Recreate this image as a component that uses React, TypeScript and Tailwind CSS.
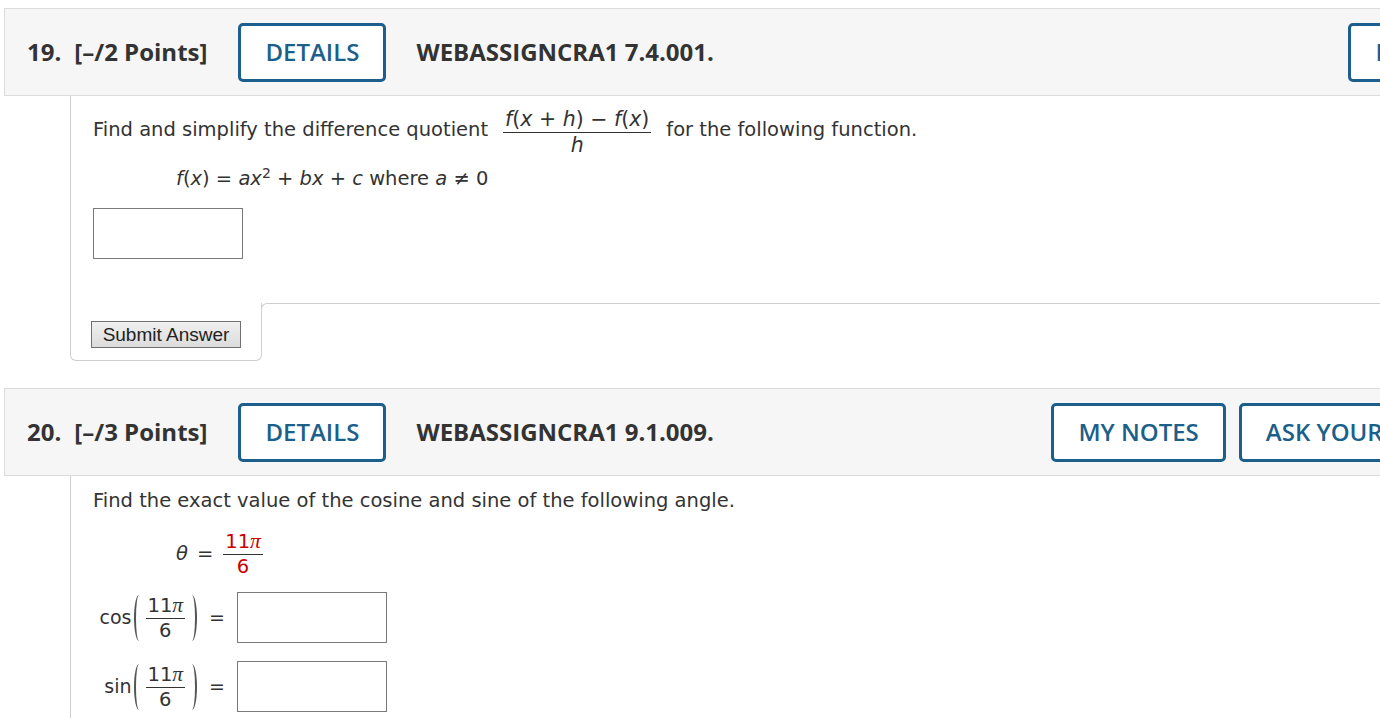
const hdr = "font-['Open_Sans',sans-serif]"
const body = "font-['DejaVu_Sans',Verdana,sans-serif]"

function OutlineButton({ label, className = "" }: { label: string; className?: string }) {
  return (
    <button
      className={`flex h-[59px] shrink-0 items-center whitespace-nowrap rounded-[5px] border-[3px] border-[#1c5f8c] bg-white px-[24px] text-[24px] font-semibold text-[#1b5f8b] ${className}`}
    >
      {label}
    </button>
  )
}

function Header({
  num,
  points,
  code,
  titleWidth,
  buttons,
}: {
  num: string
  points: string
  code: string
  titleWidth: string
  buttons: string[]
}) {
  return (
    <div className={`flex h-[88px] items-center whitespace-nowrap border border-r-0 border-[#dcdcdc] bg-[#f6f6f6] pl-[22px] text-[#333] ${hdr}`}>
      <span className="shrink-0 text-[24px] font-bold">{num}</span>
      <span className="ml-[13px] shrink-0 text-[24px] font-bold">{points}</span>
      <OutlineButton label="DETAILS" className="ml-[31px]" />
      <div className={`ml-[30px] shrink-0 text-[24px] font-bold ${titleWidth}`}>{code}</div>
      <div className="flex shrink-0 gap-[13px]">
        {buttons.map((b) => (
          <OutlineButton key={b} label={b} />
        ))}
      </div>
    </div>
  )
}

function Frac({ top, bottom, className = "" }: { top: React.ReactNode; bottom: React.ReactNode; className?: string }) {
  return (
    <span className={`inline-flex flex-col items-center leading-none ${className}`}>
      <span className="border-b border-[#333] px-[2px] pb-[2px]">{top}</span>
      <span className="pt-[2px]">{bottom}</span>
    </span>
  )
}

function Pi() {
  return <i className="font-['Liberation_Serif',serif] text-[1.1em]">π</i>
}

function Paren({ side }: { side: "l" | "r" }) {
  return side === "l" ? (
    <span className="mx-[2px] inline-block h-[46px] w-[10px] rounded-l-[50%] border-l-2 border-[#555]" />
  ) : (
    <span className="mx-[2px] inline-block h-[46px] w-[10px] rounded-r-[50%] border-r-2 border-[#555]" />
  )
}

function TrigRow({ fn, className = "" }: { fn: string; className?: string }) {
  return (
    <div className={`flex h-[51px] items-center ${className}`}>
      <div className="flex w-[132px] items-center justify-end text-[19px]">
        <span>{fn}</span>
        <Paren side="l" />
        <Frac
          top={
            <span>
              11<Pi />
            </span>
          }
          bottom="6"
          className="text-[19.5px]"
        />
        <Paren side="r" />
        <span className="ml-[10px]">=</span>
      </div>
      <div className="ml-[12px] h-[51px] w-[150px] border border-[#7a7a7a] bg-white" />
    </div>
  )
}

export default function App() {
  return (
    <div className={`h-[718px] w-[1380px] overflow-hidden bg-white pl-[4px] pt-[8px] ${body}`}>
      <div className="w-[1700px]">
        <Header
          num="19."
          points="[–/2 Points]"
          code="WEBASSIGNCRA1 7.4.001."
          titleWidth="w-[932px]"
          buttons={["MY NOTES", "ASK YOUR TEACHER"]}
        />

        <div className="ml-[66px] text-[#333]">
          <div className="border-l border-[#cfcfcf] pb-[44px] pl-[22px] pt-[11px]">
            <div className="flex h-[46px] items-center text-[19.5px]">
              <span>Find and simplify the difference quotient</span>
              <Frac
                className="ml-[15px] mt-[4px] text-[20.5px]"
                top={
                  <span>
                    <i>f</i>(<i>x</i> + <i>h</i>) − <i>f</i>(<i>x</i>)
                  </span>
                }
                bottom={<i>h</i>}
              />
              <span className="ml-[15px]">for the following function.</span>
            </div>
            <div className="ml-[83px] mt-[14px] flex h-[24px] items-center text-[19.5px]">
              <span>
                <i>f</i>(<i>x</i>) = <i>ax</i>
                <sup className="text-[14px]">2</sup> + <i>bx</i> + <i>c</i> where <i>a</i> ≠ 0
              </span>
            </div>
            <div className="mt-[17px] h-[51px] w-[150px] border border-[#7a7a7a] bg-white" />
          </div>

          <div className="flex">
            <div className="h-[58px] w-[192px] rounded-b-[6px] border border-t-0 border-[#cfcfcf] pl-[20px] pt-[18px]">
              <button className="h-[27px] w-[150px] border border-[#707070] bg-gradient-to-b from-[#f0f0f0] to-[#dcdcdc] font-['Liberation_Sans',Arial,sans-serif] text-[19px] leading-none text-[#222]">
                Submit Answer
              </button>
            </div>
            <div className="-ml-px h-[20px] flex-1 rounded-tl-[6px] border-l border-t border-[#cfcfcf]" />
          </div>
        </div>

        <div className="mt-[27px]">
          <Header
            num="20."
            points="[–/3 Points]"
            code="WEBASSIGNCRA1 9.1.009."
            titleWidth="w-[635px]"
            buttons={["MY NOTES", "ASK YOUR TEACHER", "PRACTICE ANOTHER"]}
          />
        </div>

        <div className="ml-[66px] border-l border-[#cfcfcf] pb-[20px] pl-[22px] pt-[13px] text-[#333]">
          <div className="flex h-[24px] items-center text-[19.5px]">Find the exact value of the cosine and sine of the following angle.</div>
          <div className="ml-[83px] mt-[16px] flex h-[50px] items-center text-[19.5px]">
            <i>θ</i>
            <span className="ml-[9px]">=</span>
            <Frac
              className="ml-[10px] text-[#c00]"
              top={
                <span>
                  11<Pi />
                </span>
              }
              bottom="6"
            />
          </div>
          <TrigRow fn="cos" className="mt-[13px]" />
          <TrigRow fn="sin" className="mt-[18px]" />
        </div>
      </div>
    </div>
  )
}
